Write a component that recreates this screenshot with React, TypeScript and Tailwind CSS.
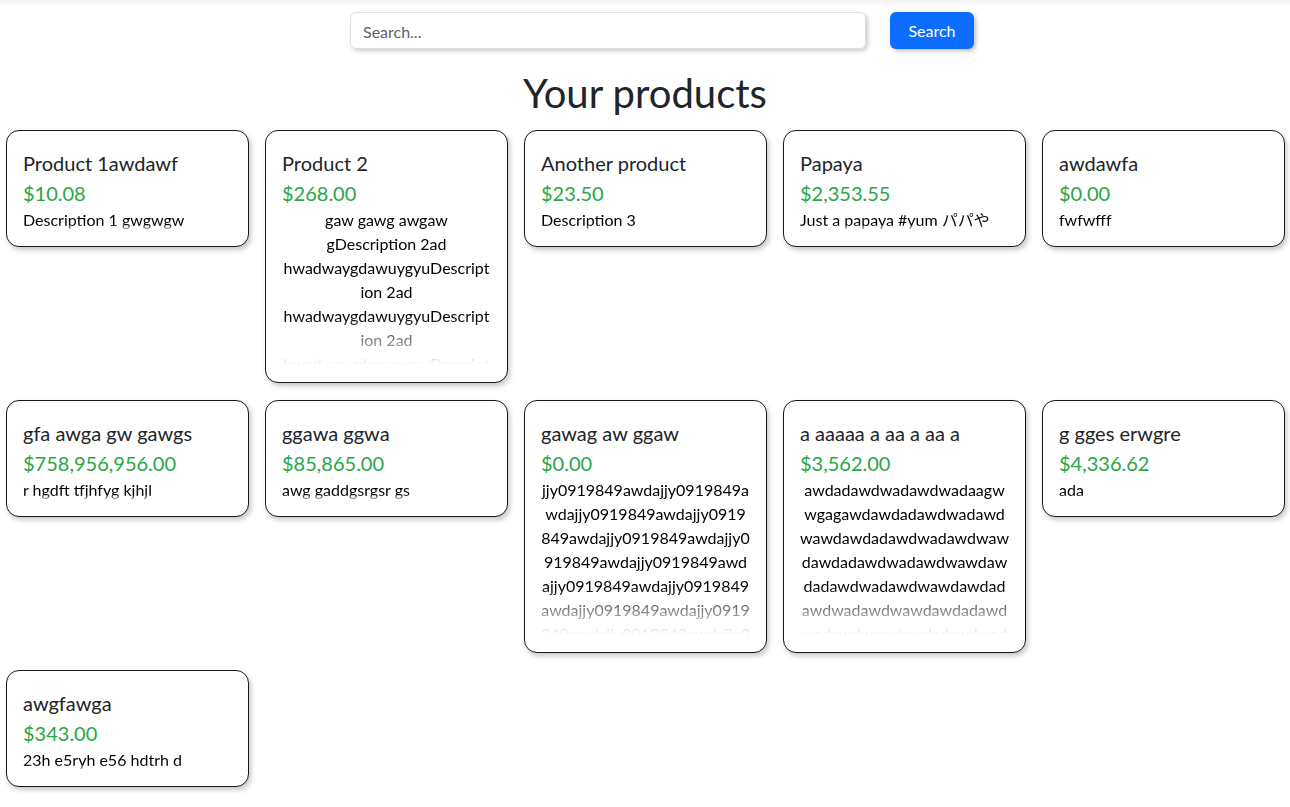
import { useState } from "react";

type Product = {
  name: string;
  price: number;
  description: string;
  center?: boolean;
};

const rep = (s: string, n: number) => Array(n).fill(s).join("");

const products: Product[] = [
  { name: "Product 1awdawf", price: 10.08, description: "Description 1 gwgwgw" },
  {
    name: "Product 2",
    price: 268,
    description: "gaw gawg awgaw g" + rep("Description 2ad hwadwaygdawuygyu", 6),
    center: true,
  },
  { name: "Another product", price: 23.5, description: "Description 3" },
  { name: "Papaya", price: 2353.55, description: "Just a papaya #yum パパや" },
  { name: "awdawfa", price: 0, description: "fwfwfff" },
  { name: "gfa awga gw gawgs", price: 758956956, description: "r hgdft tfjhfyg kjhjl" },
  { name: "ggawa ggwa", price: 85865, description: "awg gaddgsrgsr gs" },
  {
    name: "gawag aw ggaw",
    price: 0,
    description: rep("jjy0919849awda", 16),
    center: true,
  },
  {
    name: "a aaaaa a aa a aa a",
    price: 3562,
    description: "awdadawdwadawdwadaagwwgag" + rep("awdawdadawdwadawdw", 10),
    center: true,
  },
  { name: "g gges erwgre", price: 4336.62, description: "ada" },
  { name: "awgfawga", price: 343, description: "23h e5ryh e56 hdtrh d" },
];

const money = (n: number) =>
  "$" + n.toLocaleString("en-US", { minimumFractionDigits: 2, maximumFractionDigits: 2 });

function ProductCard({ product }: { product: Product }) {
  return (
    <div className="self-start rounded-[13px] border border-[#1a1a1a] bg-white px-4 pt-[20px] pb-[14px] shadow-[2px_3px_5px_rgba(0,0,0,0.22)]">
      <h5 className="text-[20px] leading-6 text-[#212529]">{product.name}</h5>
      <p className="mt-[6px] text-[20px] leading-6 text-[#28a745]">{money(product.price)}</p>
      <p
        className={`mt-[3px] max-h-40 overflow-hidden break-words text-[16px] leading-6 text-black [mask-image:linear-gradient(to_bottom,black_68%,transparent_98%)] ${
          product.center ? "text-center" : "text-left"
        }`}
      >
        {product.description}
      </p>
    </div>
  );
}

export default function App() {
  const [query, setQuery] = useState("");

  return (
    <div className="min-h-[807px] bg-white font-['Lato','Noto_Sans_CJK_JP',sans-serif]">
      <div className="h-[6px] bg-gradient-to-b from-[#f3f3f3] to-white" />
      {/* search bar */}
      <div className="mt-[6px] flex justify-center">
        <div className="ml-[34px] flex gap-6">
          <input
            type="text"
            value={query}
            onChange={(e) => setQuery(e.target.value)}
            placeholder="Search..."
            className="h-[37px] w-[516px] rounded-[6px] border border-[#dcdfe3] px-3 pt-[1px] text-[16px] text-[#212529] placeholder:text-[#5c636a] shadow-[2px_2px_4px_rgba(0,0,0,0.2)] focus:outline-none"
          />
          <button className="h-[37px] w-[84px] rounded-[6px] bg-[#0d6efd] pt-[1px] text-[16px] text-white shadow-[2px_2px_4px_rgba(0,0,0,0.25)]">
            Search
          </button>
        </div>
      </div>

      <h1 className="mt-[20px] text-center text-[40px] leading-[48px] text-[#212529]">Your products</h1>

      {/* product grid */}
      <div className="mt-[13px] grid grid-cols-5 gap-x-4 gap-y-[17px] pl-[6px] pr-[5px] pb-4">
        {products.map((p, i) => (
          <ProductCard key={i} product={p} />
        ))}
      </div>
    </div>
  );
}
